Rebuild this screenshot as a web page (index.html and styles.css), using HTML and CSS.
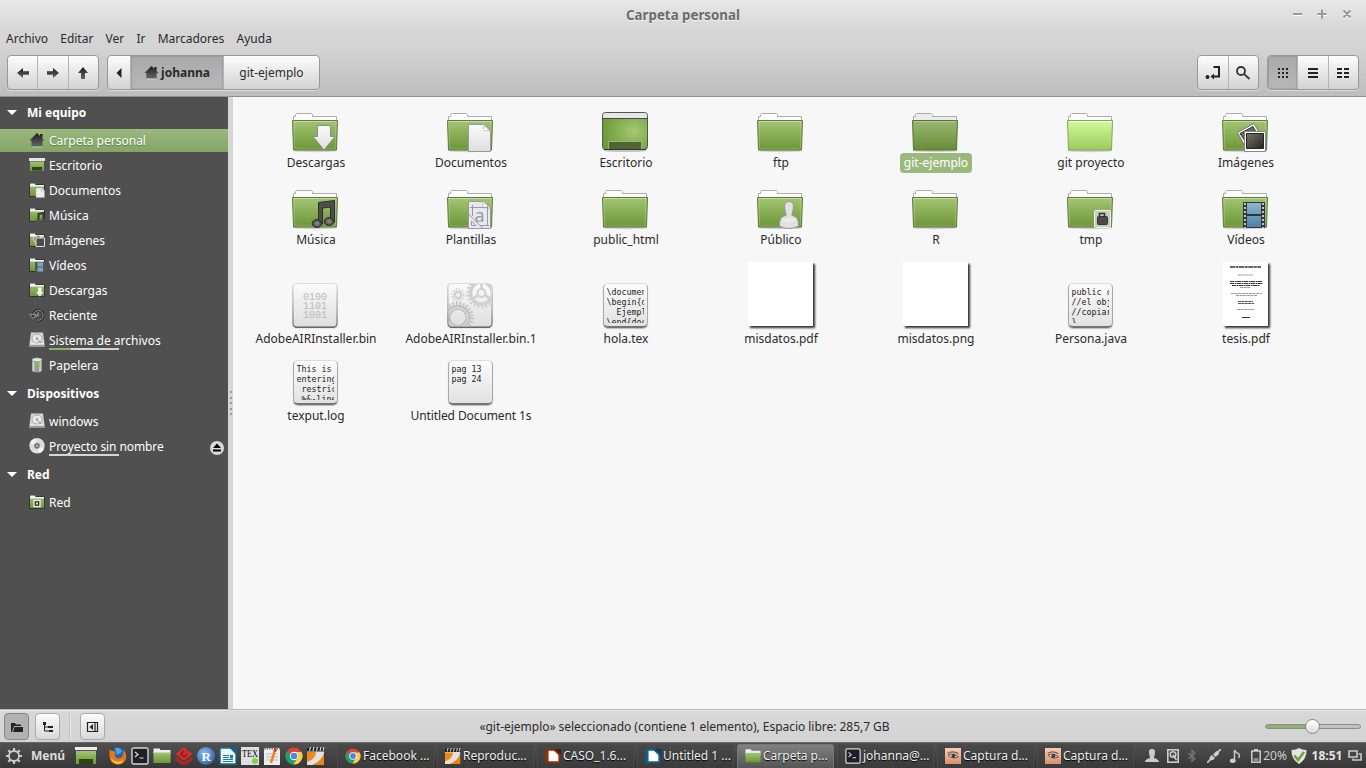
FILE: index.html
```html
<!DOCTYPE html>
<html lang="es">
<head>
<meta charset="utf-8">
<title>Carpeta personal</title>
<link rel="stylesheet" href="styles.css">
</head>
<body>
<svg class="defs" width="0" height="0">
  <defs>
    <linearGradient id="g-folder" x1="0" y1="0" x2="0" y2="1"><stop offset="0" stop-color="#a3c573"/><stop offset="1" stop-color="#6c9636"/></linearGradient>
    <linearGradient id="g-folder-sel" x1="0" y1="0" x2="0" y2="1"><stop offset="0" stop-color="#99b872"/><stop offset="1" stop-color="#678d36"/></linearGradient>
    <linearGradient id="g-folder-light" x1="0" y1="0" x2="0" y2="1"><stop offset="0" stop-color="#d2fa9b"/><stop offset="1" stop-color="#9ccb5b"/></linearGradient>
    <linearGradient id="g-paper" x1="0" y1="0" x2="0" y2="1"><stop offset="0" stop-color="#fbfbfb"/><stop offset="1" stop-color="#dedede"/></linearGradient>
    <linearGradient id="g-edge" x1="0" y1="0" x2="0" y2="1"><stop offset="0" stop-color="#dcdcdc"/><stop offset=".6" stop-color="#999"/><stop offset="1" stop-color="#555"/></linearGradient>
    <linearGradient id="g-dark" x1="0" y1="0" x2="0" y2="1"><stop offset="0" stop-color="#1c1c1c"/><stop offset="1" stop-color="#666"/></linearGradient>
    <linearGradient id="g-blue" x1="0" y1="0" x2="0" y2="1"><stop offset="0" stop-color="#8db5cf"/><stop offset="1" stop-color="#4b83a6"/></linearGradient>
    <linearGradient id="g-skin" x1="0" y1="0" x2="0" y2="1"><stop offset="0" stop-color="#f8cdb4"/><stop offset="1" stop-color="#d98f6c"/></linearGradient>
    <linearGradient id="g-photo" x1="0" y1="0" x2="1" y2="1"><stop offset="0" stop-color="#75786a"/><stop offset="1" stop-color="#26231f"/></linearGradient>
    <radialGradient id="g-desk" cx=".7" cy=".5" r=".7"><stop offset="0" stop-color="#a4c873"/><stop offset="1" stop-color="#6f9a38"/></radialGradient>
    <radialGradient id="g-ball" cx=".4" cy=".35" r=".8"><stop offset="0" stop-color="#8fbdf0"/><stop offset="1" stop-color="#1d55a8"/></radialGradient>
    <radialGradient id="g-note"><stop offset="0" stop-color="#999"/><stop offset="1" stop-color="#3c3c3c"/></radialGradient>
    <clipPath id="c-doc"><rect x="2.500" y="3" width="43" height="42.500" rx="3"/></clipPath>
  </defs>

  <symbol id="tab" viewBox="0 0 48 48">
    <ellipse cx="24" cy="45.7" rx="22" ry="1.6" fill="#000" opacity=".16"/>
    <path d="M2.5 16V11.5H4.5V9.5L5.5 8.500H20.500L21.500 9.500V11.500H45.500V16Z" fill="#fdfdfd" stroke="#adadad"/>
  </symbol>
  <symbol id="folder" viewBox="0 0 48 48">
    <use href="#tab"/>
    <path d="M1.500 15.500H46.500L45.500 45H2.500Z" fill="url(#g-folder)" stroke="#5f7b3c"/>
    <path d="M2.500 16.500H45.500" stroke="#c5dca4"/><path d="M3 17L3.600 43.800H44.400L45 17" fill="none" stroke="#fff" opacity=".2"/>
  </symbol>
  <symbol id="folder-sel" viewBox="0 0 48 48">
    <use href="#tab"/><path d="M3 12h42v3H3zM5.500 9h15v4h-15z" fill="#ececec"/>
    <path d="M1.500 15.500H46.500L45.500 45H2.500Z" fill="url(#g-folder-sel)" stroke="#56713a"/>
    <path d="M2.500 16.500H45.500" stroke="#b3c89b"/>
  </symbol>
  <symbol id="folder-light" viewBox="0 0 48 48">
    <use href="#tab"/>
    <path d="M1.500 15.500H46.500L45.500 45H2.500Z" fill="url(#g-folder-light)" stroke="#84a35e"/>
    <path d="M2.500 16.500H45.500" stroke="#efffd9"/>
  </symbol>
  <symbol id="f-down" viewBox="0 0 48 48">
    <use href="#folder"/><path d="M26.500 20.500H39.500V31.500H44L33 45L22 31.500H26.500Z" fill="url(#g-paper)" stroke="#8b8b8b"/>
  </symbol>
  <symbol id="f-docs" viewBox="0 0 48 48">
    <use href="#folder"/><path d="M22.500 19.500H38L44.500 26V46.500H22.500Z" fill="url(#g-paper)" stroke="#999"/>
    <path d="M37 19.500C38.500 22 37 25 38 25.500S42 25 44.500 26.500Z" fill="#fff" stroke="#c2c2c2"/>
  </symbol>
  <symbol id="f-desk" viewBox="0 0 48 48">
    <ellipse cx="24" cy="45.500" rx="22" ry="1.600" fill="#000" opacity=".2"/>
    <rect x="1.500" y="7.500" width="45" height="37" rx="3" fill="url(#g-desk)" stroke="#555"/>
    <path d="M2 13V10.500Q2 8 4.500 8H43.500Q46 8 46 10.500V13Z" fill="#e6e6e6"/><path d="M1.500 13.500H46.500" stroke="#4a4a4a"/>
    <path d="M7.500 44V36.500H40.500V44" fill="#4f6532" stroke="#98b96f"/><path d="M3 44.500h42" stroke="#333"/>
  </symbol>
  <symbol id="f-music" viewBox="0 0 48 48">
    <use href="#folder"/><path d="M27.500 20.500L43.500 18.500V40H39.500V25L31.500 26V42H27.500Z" fill="#4d4d4d" stroke="#2f2f2f"/>
    <ellipse cx="26" cy="41.500" rx="4.700" ry="4" fill="url(#g-note)" stroke="#2f2f2f"/><ellipse cx="38" cy="39.500" rx="4.700" ry="4" fill="url(#g-note)" stroke="#2f2f2f"/>
  </symbol>
  <symbol id="f-templ" viewBox="0 0 48 48">
    <use href="#folder"/><path d="M22.500 19.500H38L44.500 26V46.500H22.500Z" fill="#e9e9ec" stroke="#999"/>
    <path d="M37 19.500V25.500L44.500 26.500Z" fill="#fff" stroke="#bbb"/>
    <path d="M24 25.500H42M26.500 23V34M41.500 24V44M34 43.500H43M22.500 32L37 46.500H22.500ZM25.500 39V43.500H30Z" fill="none" stroke="#9598ae"/>
  </symbol>
  <symbol id="f-pub" viewBox="0 0 48 48">
    <use href="#folder"/><path d="M33 19.500C37.500 19.500 38 24 37 28C36.500 31 35.500 32 36 33.500C41 34.500 42.500 37 42.500 44Q38 46.500 33 46.500T23.500 44C23.500 37 25 34.500 30 33.500C30.500 32 29.500 31 29 28C28 24 28.500 19.500 33 19.500Z" fill="#e1e1e1" stroke="#969696"/>
    <path d="M27 38h12" stroke="#f4f4f4" stroke-width="3" opacity=".6"/>
  </symbol>
  <symbol id="f-tmp" viewBox="0 0 48 48">
    <use href="#folder"/><rect x="28.500" y="28.500" width="16" height="17" rx="1.500" fill="#c6ccba" stroke="#f0f2ec"/>
    <rect x="31.500" y="34.500" width="10" height="8" rx="1" fill="#4b4b4b" stroke="#333"/><path d="M33.500 34V31.500H38.500V34" fill="none" stroke="#333" stroke-width="1.600"/>
  </symbol>
  <symbol id="f-img" viewBox="0 0 48 48">
    <use href="#folder"/>
    <path d="M16.500 27.500L33 18.500L43 36L26 45Z" fill="#fff" stroke="#777"/><path d="M19 28.500L32 21.500L40 36L28 42Z" fill="#66665f" stroke="#333"/>
    <path d="M23.500 26.500H44.500V46.500H23.500Z" fill="#fff" stroke="#888"/><path d="M25.500 28.500H42.500V43.500H25.500Z" fill="url(#g-photo)" stroke="#222"/>
  </symbol>
  <symbol id="f-video" viewBox="0 0 48 48">
    <use href="#folder"/><path d="M22 20H44V46H22Z" fill="#363636"/><path d="M26 21H40V32H26ZM26 34H40V45H26Z" fill="url(#g-blue)"/>
    <path d="M24 21V46M42 21V46" stroke="#b9c7d0" stroke-width="2" stroke-dasharray="2 2"/>
  </symbol>
  <symbol id="doc" viewBox="0 0 48 48">
    <rect x="1" y="3" width="46" height="44.500" rx="4" fill="#000" opacity=".12"/>
    <rect x="2" y="2.500" width="44" height="43.500" rx="3.500" fill="url(#g-paper)" stroke="url(#g-edge)"/>
    <path d="M4 46.500H44" stroke="#555" opacity=".7"/>
  </symbol>
  <symbol id="doc-gear" viewBox="0 0 48 48"><use href="#doc"/>
    <g fill="none" stroke="#d0d0d0" clip-path="url(#c-doc)">
      <circle cx="12" cy="14" r="3" stroke-width="2"/><circle cx="12" cy="14" r="5.500" stroke-width="2.500" stroke-dasharray="1.400 1.480"/>
      <circle cx="35.500" cy="12" r="4" stroke-width="2"/><circle cx="35.500" cy="12" r="11" stroke-width="3.500"/><path d="M35.500 8V1M39 14l6 5M32 14l-6 5" stroke-width="2.500"/>
      <circle cx="35.500" cy="12" r="14" stroke-width="3" stroke-dasharray="2 2"/>
      <circle cx="12" cy="36.500" r="8.500" stroke-width="2" stroke="#c2c2c2"/><circle cx="12" cy="36.500" r="11.500" stroke-width="2.500" stroke="#c2c2c2"/>
      <circle cx="12" cy="36.500" r="14.300" stroke-width="3" stroke-dasharray="1.800 1.800" stroke="#c2c2c2"/>
    </g>
  </symbol>

  <symbol id="home" viewBox="0 0 16 16"><path d="M8 1L15.500 8.500H13.500V14.500H2.500V8.500H.5ZM11 2h2.500v4H11z" fill="url(#g-dark)"/><path d="M3 15h10" stroke="#fff" opacity=".45"/></symbol>
  <symbol id="s-folder" viewBox="0 0 16 16"><path d="M.5 1.500H6V2.500H15.500V14.500H.5Z" fill="url(#g-folder)" stroke="#333"/><path d="M1 1.500H6L6.500 3H15V5H1Z" fill="#f3f3f3"/><path d="M1 4.500H15" stroke="#c9d8b4"/></symbol>
  <symbol id="s-desk" viewBox="0 0 16 16"><path d="M0 1h16v3H0z" fill="#e6e6e6"/><path d="M1 4.500h14V14H1z" fill="url(#g-folder)"/><path d="M3 10h10v3.500H3z" fill="#31431d"/></symbol>
  <symbol id="s-docs" viewBox="0 0 16 16"><use href="#s-folder"/><path d="M7 6h6l2.500 2.500V15.500H7z" fill="#eee" stroke="#aaa" stroke-width=".5"/><path d="M12 6v3h3" fill="none" stroke="#bbb" stroke-width=".7"/></symbol>
  <symbol id="s-music" viewBox="0 0 16 16"><use href="#s-folder"/><path d="M9.500 14V7L14.500 6V13" fill="none" stroke="#333" stroke-width="2"/><circle cx="8.500" cy="14" r="2" fill="#555"/><circle cx="13.500" cy="13" r="2" fill="#555"/></symbol>
  <symbol id="s-img" viewBox="0 0 16 16"><use href="#s-folder"/><path d="M4 6l6-3 3 5-6 4z" fill="#777" stroke="#ddd"/><path d="M7 6h8.500v8.500H7z" fill="#4c4c46" stroke="#ddd"/></symbol>
  <symbol id="s-video" viewBox="0 0 16 16"><use href="#s-folder"/><path d="M6 5h10V15H6z" fill="#555"/><path d="M8.500 5.500h5.500v4H8.500zM8.500 10.500h5.500v4H8.500z" fill="#7ba7c6"/></symbol>
  <symbol id="s-down" viewBox="0 0 16 16"><use href="#s-folder"/><path d="M9 5.500h3.500v4.500h2l-3.700 4.500L7 10h2z" fill="#f4f4f4"/></symbol>
  <symbol id="s-net" viewBox="0 0 16 16"><use href="#s-folder"/><path d="M5 6.500h6v6H5z" fill="#222" stroke="#e8e8e8" stroke-width="1.500"/><path d="M7 8.500h2v2H7z" fill="#eee"/></symbol>
  <symbol id="s-recent" viewBox="0 0 16 16"><path d="M4.500 8A4.800 4.800 0 1 1 9 13.200" fill="none" stroke="#222" stroke-width="2.800"/><path d="M4.500 8A4.800 4.800 0 1 1 9 13.200M9 5.500V9H6" fill="none" stroke="#aaa"/><path d="M.8 7.500H7L4 11.500Z" fill="#333" stroke="#aaa" stroke-width=".8"/></symbol>
  <symbol id="s-disk" viewBox="0 0 16 16"><path d="M2 .5H14L15.500 12V15H.5V12Z" fill="#d5d5d5"/><path d="M1 12.500h14v2.500H1z" fill="#999"/><path d="M1 12h14" stroke="#fff"/><ellipse cx="8" cy="6.500" rx="5" ry="4.500" fill="#e9e9e9" stroke="#aaa"/><path d="M8 7l4 4" stroke="#888"/><circle cx="8" cy="6.500" r="1.200" fill="#999"/></symbol>
  <symbol id="s-trash" viewBox="0 0 16 16"><path d="M3 2.500V14Q8 17 13 14V2.500Z" fill="#9b9c9f"/><path d="M4.500 4v10.500M11 4v10.500" stroke="#d8d8da" stroke-width="1.500"/><ellipse cx="8" cy="2.800" rx="5" ry="2" fill="#e6e6e6" stroke="#777" stroke-width=".6"/><path d="M6.500 5h4v5h-4z" fill="#7fc043"/></symbol>
  <symbol id="s-cd" viewBox="0 0 16 16"><circle cx="8" cy="7.700" r="7.700" fill="#dedede"/><path d="M8 8L1 5A7.600 7.600 0 0 1 6 .7ZM8 8L15 11A7.600 7.600 0 0 1 10 15.300Z" fill="#f5f5f5"/><circle cx="8" cy="7.700" r="2.800" fill="#666" stroke="#aaa"/><circle cx="8" cy="7.700" r="1" fill="#ddd"/></symbol>

  <symbol id="a-term" viewBox="0 0 18 18"><rect x="1" y="1" width="16" height="16" rx="1.500" fill="#201f28" stroke="#d3d3d3" stroke-width="1.400"/><path d="M4 5l3 2.500L4 10M8.500 11h4" fill="none" stroke="#ddd" stroke-width="1.200"/></symbol>
  <symbol id="a-folder" viewBox="0 0 18 18"><path d="M.5 1.500H7V3H17.500V7H.5z" fill="#eee"/><path d="M.5 5.500h17v10.500H.5z" fill="url(#g-folder)"/></symbol>
  <symbol id="a-chrome" viewBox="0 0 18 18"><circle cx="9" cy="9" r="8.500" fill="#dd4437"/><path d="M9 9L1.600 4.800A8.500 8.500 0 0 0 8.500 17.500L12.700 11Z" fill="#1da261"/><path d="M9 5H16.500A8.500 8.500 0 0 1 8.500 17.500L12.500 11Z" fill="#ffce43"/><circle cx="9" cy="9" r="4.200" fill="#fff"/><circle cx="9" cy="9" r="3.300" fill="#4687f4"/></symbol>
  <symbol id="a-clap" viewBox="0 0 18 18"><path d="M0 4h17v14H0z" fill="#e2e2e2"/><path d="M0 5h9Q9 12 0 15z" fill="#f08a17"/><path d="M17 5.500V18H5Q15 14 17 5.500z" fill="#ee8411"/><path d="M0 1h17.500V4.500H0z" fill="#222"/><path d="M3.500 0l-1 4M7 0L6 4M10.500 0l-1 4M14 0l-1 4M17 0l-1 4" stroke="#ddd" stroke-width="1.100"/></symbol>
  <symbol id="a-eye" viewBox="0 0 18 18"><path d="M0 0h18v18H0z" fill="url(#g-skin)"/><path d="M3 6Q9 2.500 15 6.500" fill="none" stroke="#7b5a4b" stroke-width="1.300"/><path d="M3.500 8Q9 5 15 10Q9 13 3.500 8Z" fill="#f6f0ec" stroke="#4a3d38"/><circle cx="9.500" cy="9" r="2.300" fill="#33414a"/></symbol>
</svg>

<div class="window">
  <header class="header">
    <div class="titlebar">
      <h1>Carpeta personal</h1>
      <svg class="winctl" width="64" height="14" viewBox="0 0 64 14"><g fill="none" stroke="#fff" stroke-width="2"><path d="M2 8h9M27 8h9M52.500 4.500l7 7M59.500 4.500l-7 7"/></g><g fill="none" stroke="#999" stroke-width="2"><path d="M2 7h9M26.500 7h9M31 2.500v9M52.500 3.500l7 7M59.500 3.500l-7 7"/></g></svg>
    </div>
    <nav class="menubar"><span>Archivo</span><span>Editar</span><span>Ver</span><span>Ir</span><span>Marcadores</span><span>Ayuda</span></nav>
    <div class="toolbar">
      <div class="group nav">
        <button><svg width="14" height="14" viewBox="0 0 14 14"><path d="M1 7L7 2V5.200H13V8.800H7V12Z" fill="url(#g-dark)"/></svg></button>
        <button><svg width="14" height="14" viewBox="0 0 14 14"><path d="M13 7L7 2V5.200H1V8.800H7V12Z" fill="url(#g-dark)"/></svg></button>
        <button><svg width="14" height="14" viewBox="0 0 14 14"><path d="M7 1L12 7H9V13H5V7H2Z" fill="url(#g-dark)"/></svg></button>
      </div>
      <div class="group path">
        <button class="tri"><svg width="8" height="10" viewBox="0 0 8 10"><path d="M6.500 0V10L1.500 5Z" fill="#222"/></svg></button>
        <button class="on crumb"><svg width="15" height="15"><use href="#home"/></svg><b>johanna</b></button>
        <button class="last">git-ejemplo</button>
      </div>
      <div class="spacer"></div>
      <div class="group tools">
        <button><svg width="16" height="16" viewBox="0 0 16 16"><circle cx="2.500" cy="12" r="2" fill="#222"/><path d="M8.500 2H14V11.500H8" fill="none" stroke="#222" stroke-width="2"/><path d="M5.500 11.500L9 8.500V14.500Z" fill="#222"/></svg></button>
        <button><svg width="16" height="16" viewBox="0 0 16 16"><circle cx="6" cy="6" r="4" fill="none" stroke="#333" stroke-width="1.800"/><path d="M9 9L14.500 14" stroke="#444" stroke-width="2.200"/></svg></button>
      </div>
      <div class="group views">
        <button class="on"><svg width="12" height="12" viewBox="0 0 12 12"><path d="M1 2h12M1 6h12M1 10h12" stroke="#222" stroke-width="2" stroke-dasharray="2 2"/></svg></button>
        <button><svg width="12" height="12" viewBox="0 0 12 12"><path d="M1 2h10M1 6h10M1 10h10" stroke="#222" stroke-width="2"/></svg></button>
        <button><svg width="14" height="12" viewBox="0 0 14 12"><path d="M1 2h5M1 6h5M1 10h5M8 2h5M8 6h5M8 10h5" stroke="#222" stroke-width="2"/></svg></button>
      </div>
    </div>
  </header>

  <main class="body">
    <aside class="sidebar">
      <h2><i></i>Mi equipo</h2>
      <div class="row sel"><svg><use href="#home"/></svg><span>Carpeta personal</span></div>
      <div class="row"><svg><use href="#s-desk"/></svg><span>Escritorio</span></div>
      <div class="row"><svg><use href="#s-docs"/></svg><span>Documentos</span></div>
      <div class="row"><svg><use href="#s-music"/></svg><span>Música</span></div>
      <div class="row"><svg><use href="#s-img"/></svg><span>Imágenes</span></div>
      <div class="row"><svg><use href="#s-video"/></svg><span>Vídeos</span></div>
      <div class="row"><svg><use href="#s-down"/></svg><span>Descargas</span></div>
      <div class="row"><svg><use href="#s-recent"/></svg><span>Reciente</span></div>
      <div class="row"><svg><use href="#s-disk"/></svg><span class="usage part">Sistema de archivos</span></div>
      <div class="row"><svg><use href="#s-trash"/></svg><span>Papelera</span></div>
      <h2><i></i>Dispositivos</h2>
      <div class="row"><svg><use href="#s-disk"/></svg><span>windows</span></div>
      <div class="row"><svg><use href="#s-cd"/></svg><span class="usage tight">Proyecto sin nombre</span>
        <svg class="eject" viewBox="0 0 16 16"><circle cx="8" cy="8" r="7" fill="#d9d9d9"/><path d="M8 3.500L12 8H4ZM4 9.500h8v2H4z" fill="#000"/></svg></div>
      <h2><i></i>Red</h2>
      <div class="row"><svg><use href="#s-net"/></svg><span>Red</span></div>
    </aside>
    <div class="split"><i></i><i></i><i></i><i></i><i></i></div>
    <section class="files">
      <div class="file"><svg><use href="#f-down"/></svg><span>Descargas</span></div>
      <div class="file"><svg><use href="#f-docs"/></svg><span>Documentos</span></div>
      <div class="file"><svg><use href="#f-desk"/></svg><span>Escritorio</span></div>
      <div class="file"><svg><use href="#folder"/></svg><span>ftp</span></div>
      <div class="file sel"><svg><use href="#folder-sel"/></svg><span>git-ejemplo</span></div>
      <div class="file"><svg><use href="#folder-light"/></svg><span>git proyecto</span></div>
      <div class="file"><svg><use href="#f-img"/></svg><span>Imágenes</span></div>

      <div class="file"><svg><use href="#f-music"/></svg><span>Música</span></div>
      <div class="file"><svg><use href="#f-templ"/><text x="28.500" y="39.500" font-family="Noto Sans" font-size="18" fill="#9598ae">a</text></svg><span>Plantillas</span></div>
      <div class="file"><svg><use href="#folder"/></svg><span>public_html</span></div>
      <div class="file"><svg><use href="#f-pub"/></svg><span>Público</span></div>
      <div class="file"><svg><use href="#folder"/></svg><span>R</span></div>
      <div class="file"><svg><use href="#f-tmp"/></svg><span>tmp</span></div>
      <div class="file"><svg><use href="#f-video"/></svg><span>Vídeos</span></div>

      <div class="file"><svg><use href="#doc"/><g font-family="Liberation Mono" font-size="10" fill="#bbb"><text x="12" y="18.500">0100</text><text x="12" y="27.500">1101</text><text x="12" y="36.500">1001</text></g></svg><span>AdobeAIRInstaller.bin</span></div>
      <div class="file"><svg><use href="#doc-gear"/></svg><span>AdobeAIRInstaller.bin.1</span></div>
      <div class="file"><div class="text"><pre>\documentclass
\begin{document}
  Ejemplo
\end{document}</pre></div><span>hola.tex</span></div>
      <div class="file"><div class="thumb wide"></div><span>misdatos.pdf</span></div>
      <div class="file"><div class="thumb wide"></div><span>misdatos.png</span></div>
      <div class="file"><div class="text"><pre>public class
//el objeto
//copiar
}</pre></div><span>Persona.java</span></div>
      <div class="file"><div class="thumb page"><svg viewBox="0 0 45 64"><g stroke="#333" fill="none"><path d="M7 5h31" stroke-width="1.600" stroke-dasharray="5 .6 3 .5"/><path d="M15 13h15" stroke="#999" stroke-dasharray="3 .5"/><path d="M7 19.500h32M7 21.500h33M9 23.500h28" stroke-width="1.100" stroke-dasharray="4 .6 2 .4"/><path d="M17 25.500h11M8 31.500h31M13 33.500h21" stroke="#999" stroke-dasharray="3 .6"/><path d="M15 39.500h15M15 41.500h16" stroke="#555" stroke-dasharray="3 .4"/><path d="M14 47.500h17" stroke="#999" stroke-dasharray="3 .5"/><path d="M19 55.500h8"/></g></svg></div><span>tesis.pdf</span></div>

      <div class="file"><div class="text"><pre>This is pdfTeX
entering
 restricted
 %&amp;-line</pre></div><span>texput.log</span></div>
      <div class="file"><div class="text"><pre>pag 13
pag 24</pre></div><span class="tight">Untitled Document 1s</span></div>
    </section>
  </main>

  <footer class="status">
    <button class="on"><svg viewBox="0 0 14 14"><path d="M1 3h4l1 1.500h5V6H4L2 12H1zM4.500 7H13V12H3z" fill="#222"/></svg></button>
    <button><svg viewBox="0 0 14 14"><path d="M3.500 3v8H10M3.500 7H9" fill="none" stroke="#222"/><path d="M2 2h3v3H2zM7 6h5v2H7zM8 10h4v2H8z" fill="#222"/></svg></button>
    <hr>
    <button><svg viewBox="0 0 14 14"><path d="M1.500 2.500h10v9H1.500zM9 3v8" fill="none" stroke="#222" stroke-width="1.200"/><path d="M7 4v6L3.500 7z" fill="#222"/></svg></button>
    <p>«git-ejemplo» seleccionado (contiene 1 elemento), Espacio libre: 285,7 GB</p>
    <div class="slider"><i></i></div>
  </footer>
</div>

<div class="panel">
  <div class="start">
    <svg width="18" height="18" viewBox="0 0 18 18"><circle cx="9" cy="9" r="5" fill="none" stroke="#ccc" stroke-width="1.800"/><path d="M9 1v3M9 14v3M1 9h3M14 9h3M3.300 3.300l2.200 2.200M12.500 12.500l2.200 2.200M14.700 3.300l-2.200 2.200M5.500 12.500l-2.200 2.200" stroke="#ccc" stroke-width="2.200"/></svg>
    <b>Menú</b>
    <svg class="show" width="22" height="20" viewBox="0 0 22 20"><path d="M0 1h22v4H0z" fill="#eee"/><path d="M1 5h20v13H1z" fill="url(#g-folder)"/><path d="M4 13h14v5H4z" fill="#2d4516"/><path d="M0 4.500h22" stroke="#555"/></svg>
  </div>
  <div class="launch">
    <svg viewBox="0 0 18 18"><circle cx="9.500" cy="8.500" r="8" fill="#2a62ab"/><path d="M6 1Q12 0 13 5L8 8Z" fill="#4aa6df"/><path d="M.5 2Q2 4.500 4 4Q8 5 6 7Q5 10 9 11.500Q13 12 14 7L15 3Q19 9 16 14Q13 18 8 17.500Q1 16 .5 10Z" fill="#e67817"/><path d="M2 11Q7 17 14 13L13 16Q7 19 3 14Z" fill="#fbc035"/></svg>
    <svg><use href="#a-term"/></svg>
    <svg><use href="#a-folder"/></svg>
    <svg viewBox="0 0 18 18"><path d="M9 0L17.500 7 9 14 .5 7Z" fill="#cf2e2e"/><path d="M1 11L9 18 17 11" fill="none" stroke="#b52424" stroke-width="3"/><path d="M9 4L6 7 9 10 12 7" fill="none" stroke="#8e1717" stroke-width="1.500"/></svg>
    <svg viewBox="0 0 18 18"><circle cx="9" cy="9" r="9" fill="url(#g-ball)"/><text x="4.500" y="14" font-family="Liberation Serif" font-weight="bold" font-size="13" fill="#fff">R</text></svg>
    <svg viewBox="0 0 18 18"><path d="M1 1H11.500L17 6.500V17H1Z" fill="#f3f8fb" stroke="#0c7099" stroke-width="1.500"/><path d="M11 0h7v7z" fill="#12628c"/><path d="M4 8.500h6M4 10.500h6M4 12.500h10M4 14.500h10" stroke="#187aa8"/><path d="M11 8h3v3.500h-3z" fill="#187aa8"/></svg>
    <svg viewBox="0 0 18 18"><path d="M0 0h18v18H0z" fill="#dedede"/><text x="1" y="10" font-family="Liberation Serif" font-size="9.500" fill="#111" textLength="16" lengthAdjust="spacingAndGlyphs">TEX</text><circle cx="14" cy="14" r="3" fill="#84ce50"/></svg>
    <svg viewBox="0 0 18 18"><path d="M1 1h16v17H1z" fill="#eee"/><path d="M3 7h12M3 10h12M3 13h12" stroke="#bbb"/><path d="M1 1.500h16" stroke="#777" stroke-width="2" stroke-dasharray="1.500 1"/><path d="M12 3L8 16" stroke="#e88420" stroke-width="2.500"/><path d="M12.500 1.500l-.5 3" stroke="#c22" stroke-width="2.500"/></svg>
    <svg><use href="#a-chrome"/></svg>
    <svg><use href="#a-clap"/></svg>
  </div>
  <div class="tasks">
    <div class="task"><svg><use href="#a-chrome"/></svg>Facebook ...</div>
    <div class="task"><svg><use href="#a-clap"/></svg>Reproduc...</div>
    <div class="task"><svg viewBox="0 0 18 18"><path d="M0 1h17v16H0z" fill="#8a3208"/><path d="M4 3h6l5 5v7H4z" fill="#fff"/><path d="M11 1h7v7z" fill="#4d1b05"/></svg>CASO_1.6...</div>
    <div class="task"><svg viewBox="0 0 18 18"><path d="M0 1h17v16H0z" fill="#0b618f"/><path d="M4 3h6l5 5v7H4z" fill="#fff"/><path d="M11 1h7v7z" fill="#063c59"/></svg>Untitled 1 ...</div>
    <div class="task on"><svg><use href="#a-folder"/></svg>Carpeta p...</div>
    <div class="task"><svg><use href="#a-term"/></svg>johanna@...</div>
    <div class="task"><svg><use href="#a-eye"/></svg>Captura d...</div>
    <div class="task"><svg><use href="#a-eye"/></svg>Captura d...</div>
  </div>
  <div class="tray">
    <svg width="14" height="14" viewBox="0 0 14 14"><path d="M7 0c3 0 3.500 2.500 2.800 5C9.500 7 9 7.500 9 9c2 .8 4.500 1 5 4H0c.5-3 3-3.200 5-4 0-1.500-.5-2-.8-4C3.500 2.500 4 0 7 0z" fill="#ccc"/></svg>
    <svg width="12" height="14" viewBox="0 0 12 14"><rect x=".8" y=".8" width="10.400" height="12.400" fill="none" stroke="#ccc" stroke-width="1.600"/><circle cx="6" cy="5.500" r="2.800" fill="none" stroke="#ccc" stroke-width="1.600"/><path d="M6 6l3.500 5" stroke="#ccc" stroke-width="1.600"/></svg>
    <svg width="8" height="14" viewBox="0 0 8 14"><path d="M.5 4L7 9.500 4 12V1.500L7 4 .5 9.500" fill="none" stroke="#777" stroke-width="1.300"/></svg>
    <svg width="14" height="14" viewBox="0 0 14 14"><path d="M0 14L4 10M10 4l4-4" stroke="#ccc" stroke-width="1.600"/><path d="M2.500 11Q2 7.500 5 6L8 9Q6.500 12 2.500 11ZM6 5.500L9 2.500Q12 1 12 3Q12.500 5 11 6L8.500 8Z" fill="#ccc"/></svg>
    <svg width="12" height="14" viewBox="0 0 12 14"><path d="M5.500 12V1Q7 4 10 5Q11 7 9.500 9" fill="none" stroke="#ccc" stroke-width="1.500"/><ellipse cx="3.700" cy="11.700" rx="2.900" ry="2.200" fill="#ccc"/></svg>
    <svg width="10" height="14" viewBox="0 0 10 14"><path d="M3 0h4v2H3z" fill="#ccc"/><rect x=".8" y="2" width="8.400" height="11.200" fill="none" stroke="#ccc" stroke-width="1.500"/><path d="M2.500 9h5v3h-5z" fill="#888"/></svg>
    <span>20%</span>
    <svg width="16" height="16" viewBox="0 0 16 16"><path d="M8 0Q11 2 15.500 2Q16 11 8 16Q0 11 .5 2Q5 2 8 0Z" fill="#e4e4e4"/><path d="M3.500 7.500L7 12L13 4" fill="none" stroke="#6ca22e" stroke-width="2.500"/></svg>
    <b>18:51</b>
    <svg class="pager" width="14" height="12" viewBox="0 0 14 12"><path d="M1 1h8v6H1zM10.500 4H13v6H5V8.500" fill="none" stroke="#ccc" stroke-width="1.600"/></svg>
  </div>
</div>
</body>
</html>
```

FILE: styles.css
```css
* { box-sizing: border-box; }
body { margin: 0; width: 1366px; height: 768px; overflow: hidden; display: flex; flex-direction: column; font: 12px/16px "Noto Sans", sans-serif; color: #2a2a2a; background: #d6d6d6; }
button { font: inherit; color: inherit; border: 0; background: none; padding: 0; margin: 0; display: flex; align-items: center; justify-content: center; }
h1, h2, p, pre { margin: 0; font-size: inherit; }
svg { display: block; flex: none; }
.defs { position: absolute; }

.window { height: 742px; display: flex; flex-direction: column; }
.header { height: 97px; flex: none; background: linear-gradient(#e8e8e8, #d6d6d6 30px, #d4d4d4 48px, #bdbdbd 95px); border-bottom: 1px solid #8f8f8f; display: flex; flex-direction: column; }
.titlebar { height: 29px; display: grid; grid-template-columns: 1fr auto 1fr; align-items: center; padding: 0 11px; }
.titlebar h1 { grid-column: 2; font-size: 13.300px; color: #6b6b6b; text-shadow: 0 1px #f4f4f4; }
.winctl { justify-self: end; margin-bottom: 2px; }
.menubar { height: 19px; display: flex; align-items: center; gap: 12.200px; padding-left: 6px; }
.toolbar { display: flex; padding: 7px 7px 0; height: 42px; }
.group { display: flex; height: 35px; border: 1px solid #989898; border-radius: 4px; background: linear-gradient(#fdfdfd, #d3d3d3); box-shadow: 0 1px #dadada; overflow: hidden; }
.group button + button { border-left: 1px solid #b4b4b4; }
.nav { width: 92px; margin-right: 8px; }
.nav button, .tools button, .views button { flex: 1; }
.path { width: 213px; }
.path .tri { width: 22px; }
.group .on { background: linear-gradient(#a9a9a9, #b8b8b8); box-shadow: inset 0 0 2px #777; }
.path .crumb { width: 93px; gap: 2px; }
.path .last { flex: 1; }
.spacer { flex: 1; }
.tools { width: 62px; margin-right: 8px; }
.views { width: 92px; }

.body { height: 612px; flex: none; display: flex; }
.sidebar { width: 228px; background: #505050; color: #fff; }
.sidebar h2 { height: 31px; display: flex; align-items: center; gap: 10px; padding-left: 7px; }
.sidebar h2 i { border: 5px solid transparent; border-top: 5px solid #fff; border-bottom: 0; }
.row { height: 25px; display: flex; align-items: center; gap: 4px; padding-left: 29px; }
.row svg { width: 16px; height: 16px; margin-bottom: 1px; }
.row .eject { margin: 3px 3px 0 auto; }
.row.sel { background: linear-gradient(transparent 1px, #9ab87c 1px, #83a666 24px, transparent 24px); text-shadow: 0 1px 1px #5b7843; }
.usage { background: linear-gradient(#d5d5d5, #d5d5d5) 0 100% / 70px 2px no-repeat; padding: 1px 0; }
.usage.part { background: linear-gradient(90deg, #8fae6d 22px, #d5d5d5 22px) 0 100% / 70px 2px no-repeat; }
.tight { letter-spacing: -.1px; }
.split { width: 5px; display: flex; flex-direction: column; align-items: center; justify-content: center; gap: 3.500px; background: #d6d6d6; }
.split i { width: 2px; height: 2px; background: #999; }
.files { flex: 1; background: #f7f7f7; padding-left: 5px; display: grid; grid-template-columns: repeat(7, 155px); grid-template-rows: 76px 77px 99px 77px; }
.file { display: flex; flex-direction: column; align-items: center; justify-content: flex-end; }
.file > svg { width: 48px; height: 48px; margin-right: 1px; }
.file > span { height: 20px; line-height: 20px; padding: 0 4px; margin-left: 1px; border-radius: 4px; white-space: nowrap; }
.file.sel > span { background: #9bb97d; color: #fff; }
.text { width: 45px; height: 45px; margin: 0 1px 1px 0; padding: 3px; border: 1px solid #aaa; border-top-color: #ddd; border-bottom: 2px solid #757575; border-radius: 5px; background: linear-gradient(#fbfbfb, #e2e2e2); box-shadow: 0 1px 1px #bbb; }
.text pre { height: 36px; overflow: hidden; font: 8.300px/10px "DejaVu Sans Mono", monospace; color: #222; }
.thumb { background: #fff; box-shadow: 2px 2px 2px #333; margin-bottom: 3px; height: 64px; }
.thumb.wide { width: 65px; }
.thumb.page { width: 45px; margin-right: 1px; }

.status { flex: 1; display: flex; align-items: center; padding: 1px 5px 0 4px; border-top: 1px solid #b9b9b9; box-shadow: inset 0 1px #e8e8e8; background: linear-gradient(#d8d8d8, #d3d3d3); }
.status button { width: 25px; height: 27px; margin-right: 6px; border: 1px solid #aaa; border-radius: 4px; background: linear-gradient(#fcfcfc, #d9d9d9); }
.status button.on { background: #b1b1b1; border-color: #858585; }
.status button svg { width: 14px; height: 14px; }
.status hr { width: 2px; height: 27px; margin: 0 9px 0 3px; border: 0; border-left: 1px solid #c2c2c2; border-right: 1px solid #e8e8e8; }
.status p { flex: 1; text-align: center; white-space: nowrap; letter-spacing: -.03px; padding-right: 7px; }
.slider { width: 96px; height: 5px; border: 1px solid #8d8d8d; border-radius: 3px; background: linear-gradient(90deg, #91b26f 46px, #c2c2c2 46px); display: flex; align-items: center; padding-left: 39px; }
.slider i { flex: none; width: 15px; height: 15px; border: 1px solid #888; border-radius: 50%; background: linear-gradient(#fff, #ddd); }

.panel { height: 26px; display: flex; align-items: center; border-top: 1px solid #666; background: linear-gradient(#505050, #373737); color: #f0f0f0; padding-left: 5px; }
.start { width: 104px; display: flex; align-items: center; }
.start b { margin-left: 8px; color: #ddd; }
.show { margin-left: auto; margin-right: 12px; }
.launch { width: 228px; display: flex; gap: 4px; }
.launch svg { width: 18px; height: 18px; }
.tasks { width: 800px; display: flex; gap: 3px; height: 25px; padding-top: 1px; }
.task { width: 97px; display: flex; align-items: center; gap: 2px; padding: 0 0 2px 7px; border: 1px solid #4b4b4b; border-bottom: 0; border-radius: 3px 3px 0 0; background: linear-gradient(#484848, #3b3b3b); white-space: nowrap; text-shadow: 0 1px 1px #000; }
.task svg { width: 16px; height: 16px; }
.task.on { background: linear-gradient(#818181, #555); border-color: #777; }
.tray { display: grid; grid-template-columns: 22px 20px 18px 26px 16px 26px 12px 36px 20px 22px; align-items: center; justify-items: center; margin-left: 4px; }
.tray span { color: #ccc; }
.tray b { color: #e4e4e4; }
.pager { margin-left: 14px; }
```
